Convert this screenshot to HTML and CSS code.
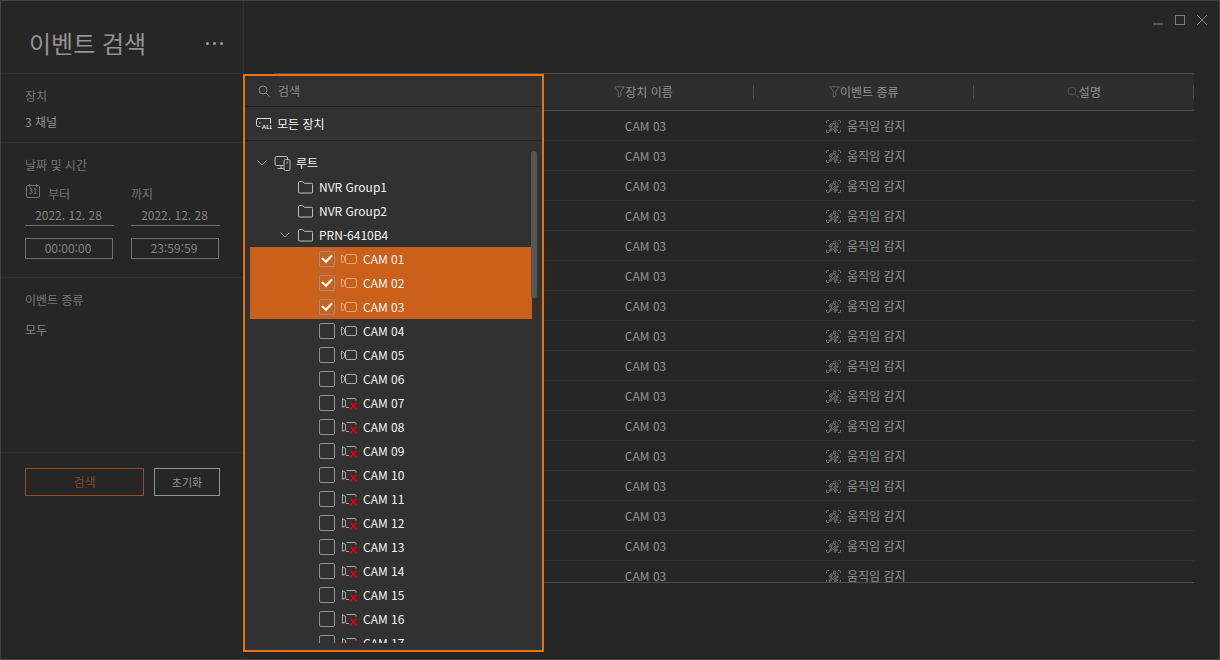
FILE: index.html
```
<!DOCTYPE html>
<html lang="ko">
<head>
<meta charset="utf-8">
<meta name="viewport" content="width=device-width, initial-scale=1">
<title>이벤트 검색</title>
<link rel="stylesheet" href="styles.css">
</head>
<body>
<svg class="sprite" aria-hidden="true">
  <symbol id="search" viewBox="0 0 12 12"><circle cx="5" cy="5" r="4"/><path d="M8 8l3.500 3.500"/></symbol>
  <symbol id="funnel" viewBox="0 0 11 12"><path d="M.7.8h9.600L6.800 5.500v4.200L4.300 11.300V5.500z"/></symbol>
  <symbol id="chevron" viewBox="0 0 10 6"><path d="M.5.5L5 5 9.500.5"/></symbol>
  <symbol id="folder" viewBox="0 0 15 13"><path d="M.5 11V1.500a1 1 0 0 1 1-1h3.200l1.500 1.800h7.300a1 1 0 0 1 1 1V11a1 1 0 0 1-1 1h-12a1 1 0 0 1-1-1z"/></symbol>
  <symbol id="root" viewBox="0 0 17 16"><path d="M9.500 10.500h-7a1.500 1.500 0 0 1-1.500-1.500V3a1.500 1.500 0 0 1 1.500-1.500h9.500A1.500 1.500 0 0 1 13.500 3v1.500M7 10.500v3M3.500 13.500h6"/><rect x="10" y="4.500" width="6" height="11" rx="1.500"/><path d="M13 6.500v2"/></symbol>
  <symbol id="camera" viewBox="0 0 16 10"><path d="M.5 1v8l3-2V3z"/><rect x="4.500" y=".5" width="11" height="9" rx="1.500"/></symbol>
  <symbol id="camera-off" viewBox="0 0 16 13"><path d="M1.500 1.500v9l3-2v-5zM15 3.500V2.500a1 1 0 0 0-1-1H5.500M4.500 3v6.500a1 1 0 0 0 1 1H8"/><path class="cross" d="M9 5.500l6.500 7M15.500 5.500l-6.500 7"/></symbol>
  <symbol id="motion" viewBox="0 0 15 13"><path d="M.5 3V1.500a1 1 0 0 1 1-1H3M12 .5h1.500a1 1 0 0 1 1 1V3M.5 10v1.500a1 1 0 0 0 1 1H3M12 12.500h1.500a1 1 0 0 0 1-1V10"/><circle cx="8.700" cy="2.300" r="1.300"/><path d="M3 6.500l2-2.700 3.500.2 1.800 2.200h1.700v1h-2.200L8.500 6.200 7.800 7.800l2.200 1.400v3H8.800V10L6.300 8.600l-1 2L3 11.500v-1.200l1.500-.8 1.800-4.200h-.8L4 7.200zM11.500 3.500l1 1.500M10.500 8.500l1 2.500"/></symbol>
</svg>

<div class="app">
  <aside class="sidebar">
    <header class="side-head">
      <h1>이벤트 검색</h1>
      <button class="more" type="button" aria-label="더 보기"><i></i><i></i><i></i></button>
    </header>
    <section class="block device">
      <h2>장치</h2>
      <p class="device-value">3 채널</p>
    </section>
    <section class="block period">
      <h2>날짜 및 시간</h2>
      <div class="range">
        <div class="stamp">
          <label for="from">
            <svg class="calendar" viewBox="0 0 14 14"><rect x=".5" y="1.500" width="13" height="12" rx="1.500"/><path d="M3.500 0v3M10.500 0v3"/><text x="7" y="10">31</text></svg>
            부터</label>
          <input class="date" id="from" value="2022. 12. 28">
          <input class="time" aria-label="시작 시간" value="00:00:00">
        </div>
        <div class="stamp">
          <label for="to">까지</label>
          <input class="date" id="to" value="2022. 12. 28">
          <input class="time" aria-label="종료 시간" value="23:59:59">
        </div>
      </div>
    </section>
    <section class="block kind">
      <h2>이벤트 종류</h2>
      <p>모두</p>
    </section>
    <div class="actions">
      <button class="btn primary" type="button">검색</button>
      <button class="btn" type="button">초기화</button>
    </div>
  </aside>

  <main class="results">
    <div class="window-buttons">
      <button type="button" aria-label="최소화"><svg viewBox="0 0 12 12"><path class="thick" d="M1 10h10"/></svg></button>
      <button type="button" aria-label="최대화"><svg viewBox="0 0 12 12"><rect x="1.500" y="1.500" width="9" height="9"/></svg></button>
      <button type="button" aria-label="닫기"><svg viewBox="0 0 12 12"><path d="M1 1l10 10M11 1L1 11"/></svg></button>
    </div>
    <div class="table-wrap">
      <table>
        <colgroup><col class="lead"><col><col><col></colgroup>
        <thead><tr>
          <th></th>
          <th><span class="cell"><svg class="ic-funnel"><use href="#funnel"/></svg>장치 이름</span></th>
          <th><span class="cell"><svg class="ic-funnel"><use href="#funnel"/></svg>이벤트 종류</span></th>
          <th><span class="cell"><svg class="ic-search dim"><use href="#search"/></svg>설명</span></th>
        </tr></thead>
        <tbody>
          <tr><td></td><td>CAM 03</td><td><span class="cell event"><svg class="ic-motion"><use href="#motion"/></svg>움직임 감지</span></td><td></td></tr>
          <tr><td></td><td>CAM 03</td><td><span class="cell event"><svg class="ic-motion"><use href="#motion"/></svg>움직임 감지</span></td><td></td></tr>
          <tr><td></td><td>CAM 03</td><td><span class="cell event"><svg class="ic-motion"><use href="#motion"/></svg>움직임 감지</span></td><td></td></tr>
          <tr><td></td><td>CAM 03</td><td><span class="cell event"><svg class="ic-motion"><use href="#motion"/></svg>움직임 감지</span></td><td></td></tr>
          <tr><td></td><td>CAM 03</td><td><span class="cell event"><svg class="ic-motion"><use href="#motion"/></svg>움직임 감지</span></td><td></td></tr>
          <tr><td></td><td>CAM 03</td><td><span class="cell event"><svg class="ic-motion"><use href="#motion"/></svg>움직임 감지</span></td><td></td></tr>
          <tr><td></td><td>CAM 03</td><td><span class="cell event"><svg class="ic-motion"><use href="#motion"/></svg>움직임 감지</span></td><td></td></tr>
          <tr><td></td><td>CAM 03</td><td><span class="cell event"><svg class="ic-motion"><use href="#motion"/></svg>움직임 감지</span></td><td></td></tr>
          <tr><td></td><td>CAM 03</td><td><span class="cell event"><svg class="ic-motion"><use href="#motion"/></svg>움직임 감지</span></td><td></td></tr>
          <tr><td></td><td>CAM 03</td><td><span class="cell event"><svg class="ic-motion"><use href="#motion"/></svg>움직임 감지</span></td><td></td></tr>
          <tr><td></td><td>CAM 03</td><td><span class="cell event"><svg class="ic-motion"><use href="#motion"/></svg>움직임 감지</span></td><td></td></tr>
          <tr><td></td><td>CAM 03</td><td><span class="cell event"><svg class="ic-motion"><use href="#motion"/></svg>움직임 감지</span></td><td></td></tr>
          <tr><td></td><td>CAM 03</td><td><span class="cell event"><svg class="ic-motion"><use href="#motion"/></svg>움직임 감지</span></td><td></td></tr>
          <tr><td></td><td>CAM 03</td><td><span class="cell event"><svg class="ic-motion"><use href="#motion"/></svg>움직임 감지</span></td><td></td></tr>
          <tr><td></td><td>CAM 03</td><td><span class="cell event"><svg class="ic-motion"><use href="#motion"/></svg>움직임 감지</span></td><td></td></tr>
          <tr><td></td><td>CAM 03</td><td><span class="cell event"><svg class="ic-motion"><use href="#motion"/></svg>움직임 감지</span></td><td></td></tr>
        </tbody>
      </table>
    </div>
  </main>

  <div class="picker">
    <label class="picker-search">
      <svg class="ic-search"><use href="#search"/></svg>
      <input type="search" placeholder="검색" aria-label="검색">
    </label>
    <button class="picker-all" type="button">
      <svg class="ic-all" viewBox="0 0 16 12"><path d="M4.500 8.500h-2a2 2 0 0 1-2-2v-4a2 2 0 0 1 2-2h12v5M1 .5h13.500M3 5h1.500"/><text x="6" y="11">ALL</text></svg>
      모든 장치
    </button>
    <div class="tree-area">
      <ul class="tree">
        <li class="node level0"><svg class="ic-chevron"><use href="#chevron"/></svg><svg class="ic-root"><use href="#root"/></svg>루트</li>
        <li class="node level1"><svg class="ic-folder"><use href="#folder"/></svg>NVR Group1</li>
        <li class="node level1"><svg class="ic-folder"><use href="#folder"/></svg>NVR Group2</li>
        <li class="node level1 open"><svg class="ic-chevron"><use href="#chevron"/></svg><svg class="ic-folder"><use href="#folder"/></svg>PRN-6410B4</li>
        <li><label class="node cam"><input type="checkbox" checked><svg class="ic-cam"><use href="#camera"/></svg>CAM 01</label></li>
        <li><label class="node cam"><input type="checkbox" checked><svg class="ic-cam"><use href="#camera"/></svg>CAM 02</label></li>
        <li><label class="node cam"><input type="checkbox" checked><svg class="ic-cam"><use href="#camera"/></svg>CAM 03</label></li>
        <li><label class="node cam"><input type="checkbox"><svg class="ic-cam"><use href="#camera"/></svg>CAM 04</label></li>
        <li><label class="node cam"><input type="checkbox"><svg class="ic-cam"><use href="#camera"/></svg>CAM 05</label></li>
        <li><label class="node cam"><input type="checkbox"><svg class="ic-cam"><use href="#camera"/></svg>CAM 06</label></li>
        <li><label class="node cam"><input type="checkbox"><svg class="ic-off"><use href="#camera-off"/></svg>CAM 07</label></li>
        <li><label class="node cam"><input type="checkbox"><svg class="ic-off"><use href="#camera-off"/></svg>CAM 08</label></li>
        <li><label class="node cam"><input type="checkbox"><svg class="ic-off"><use href="#camera-off"/></svg>CAM 09</label></li>
        <li><label class="node cam"><input type="checkbox"><svg class="ic-off"><use href="#camera-off"/></svg>CAM 10</label></li>
        <li><label class="node cam"><input type="checkbox"><svg class="ic-off"><use href="#camera-off"/></svg>CAM 11</label></li>
        <li><label class="node cam"><input type="checkbox"><svg class="ic-off"><use href="#camera-off"/></svg>CAM 12</label></li>
        <li><label class="node cam"><input type="checkbox"><svg class="ic-off"><use href="#camera-off"/></svg>CAM 13</label></li>
        <li><label class="node cam"><input type="checkbox"><svg class="ic-off"><use href="#camera-off"/></svg>CAM 14</label></li>
        <li><label class="node cam"><input type="checkbox"><svg class="ic-off"><use href="#camera-off"/></svg>CAM 15</label></li>
        <li><label class="node cam"><input type="checkbox"><svg class="ic-off"><use href="#camera-off"/></svg>CAM 16</label></li>
        <li><label class="node cam"><input type="checkbox"><svg class="ic-off"><use href="#camera-off"/></svg>CAM 17</label></li>
      </ul>
      <div class="scrollbar"></div>
    </div>
  </div>
</div>
</body>
</html>
```
FILE: styles.css
```
* { box-sizing: border-box; }

body {
  margin: 0;
  background: #262626;
  color: #929292;
  font: 12px/18px "Noto Sans CJK KR", "Noto Sans", sans-serif;
}

h1, h2, p, ul { margin: 0; padding: 0; font-weight: 400; }
ul { list-style: none; }

button, input {
  margin: 0;
  padding: 0;
  border: 0;
  border-radius: 0;
  background: none;
  color: inherit;
  font: inherit;
}

svg {
  flex: none;
  fill: none;
  stroke: currentColor;
  stroke-width: 1;
}

svg text { fill: currentColor; stroke: none; }

.sprite { position: absolute; width: 0; height: 0; }

.app {
  position: relative;
  display: flex;
  height: 100vh;
  min-height: 520px;
  border: 1px solid #434343;
}

/* Sidebar */
.sidebar {
  flex: none;
  width: 243px;
  border-right: 1px solid #303030;
}

.side-head {
  display: flex;
  align-items: center;
  justify-content: space-between;
  height: 73px;
  padding: 12px 20px 0 28px;
  border-bottom: 1px solid #303030;
}

.side-head h1 { font-size: 24px; line-height: 36px; }

.more { display: flex; gap: 4px; }
.more i { width: 3px; height: 3px; border-radius: 50%; background: #a0a0a0; }

.block { padding: 13px 24px; border-bottom: 1px solid #303030; }
.block h2 { color: #787878; font-size: 12px; }
.device { height: 69px; }
.device-value { margin-top: 8px; }
.period { height: 135px; }
.kind { height: 175px; }
.kind p { margin-top: 12px; color: #848484; }

.range { display: flex; gap: 17px; margin-top: 9px; }
.stamp { width: 89px; color: #848484; }
.stamp label { display: flex; align-items: center; gap: 8px; height: 22px; color: #747474; }
.stamp input { display: block; padding: 0 2px 2px 0; text-align: center; }
.calendar { width: 14px; height: 14px; margin: 0 0 6px 1px; }
.calendar text { font-size: 7px; font-weight: 700; text-anchor: middle; }
.date { width: 89px; height: 21px; border-bottom: 1px solid #707070; }
.time { width: 88px; height: 21px; border: 1px solid #707070; }
.stamp .time { margin-top: 12px; }

.actions { display: flex; gap: 10px; padding: 15px 23px 15px 24px; }
.btn { width: 66px; height: 28px; border: 1px solid #929292; font-size: 11px; }
.btn.primary { flex: 1; border-color: #964f24; color: #87471f; font-size: 12px; }

/* Results */
.results {
  flex: 1;
  display: flex;
  flex-direction: column;
  min-width: 0;
  padding: 0 25px 76px 30px;
}

.window-buttons {
  display: flex;
  justify-content: flex-end;
  gap: 10px;
  height: 72px;
  margin-right: -14px;
  padding-top: 13px;
  color: #7c7c7c;
}
.window-buttons button { width: 12px; height: 12px; }
.window-buttons svg { display: block; width: 12px; height: 12px; }
.thick { stroke-width: 2; stroke: #555; }

.table-wrap { flex: 1; min-height: 0; overflow: hidden; border-bottom: 1px solid #4a4a4a; }
table { width: 100%; border-spacing: 0; table-layout: fixed; }
.lead { width: 28.2%; }
th, td { padding: 0; text-align: center; font-weight: 400; }
th {
  height: 38px;
  padding-bottom: 2px;
  border-top: 1px solid #4a4a4a;
  border-bottom: 1px solid #4a4a4a;
  background: linear-gradient(#4a4a4a, #4a4a4a) right center / 1px 14px no-repeat #2e2e2e;
}
th:first-child { background: #2e2e2e; }
td { height: 30px; padding-left: 4px; border-bottom: 1px solid #303030; }

.cell { display: inline-flex; align-items: center; vertical-align: middle; }
.event { gap: 6px; }
.ic-funnel { width: 11px; height: 12px; color: #666; }
.ic-motion { width: 15px; height: 13px; color: #777; }
.ic-search { width: 12px; height: 12px; }
.dim { color: #505050; }

/* Device picker, floating over the results */
.picker {
  position: absolute;
  top: 73px;
  bottom: 7px;
  left: 242px;
  display: flex;
  flex-direction: column;
  width: 301px;
  border: 2px solid #e27412;
  background: #313131;
  color: #f4f4f4;
}

.picker-search {
  display: flex;
  align-items: center;
  gap: 8px;
  height: 31px;
  padding: 0 13px;
  border-bottom: 1px solid #232323;
  color: #888;
}
.picker-search input { flex: 1; min-width: 0; outline: 0; appearance: none; }
.picker-search input::placeholder { color: #8c8c8c; opacity: 1; }

.picker-all {
  display: flex;
  align-items: center;
  gap: 5px;
  height: 34px;
  padding: 0 11px;
  border-bottom: 1px solid #232323;
}
.ic-all { width: 16px; height: 12px; color: #ddd; }
.ic-all text { font: 700 6px "Noto Sans", sans-serif; }

.tree-area {
  flex: 1;
  display: flex;
  min-height: 0;
  margin: 10px 5px 7px;
  overflow: hidden;
}
.tree { flex: 1; }
.node { display: flex; align-items: center; height: 24px; }
.level0 { gap: 5px; padding-left: 7px; }
.level1 { gap: 6px; padding-left: 48px; }
.open { padding-left: 30px; }
.cam { gap: 6px; padding-left: 69px; }
.cam:has(:checked) { background: #cb601b; }
.cam svg { color: #aaa; }
.cam:has(:checked) svg { color: #e3a580; }

.ic-chevron { width: 10px; height: 6px; margin-right: 2px; color: #999; }
.ic-root { width: 17px; height: 16px; color: #bbb; }
.ic-folder { width: 15px; height: 13px; color: #bbb; }
.ic-cam { width: 16px; height: 10px; }
.ic-off { width: 16px; height: 13px; }
.cross { stroke: #e80000; stroke-width: 1.3; }

input[type="checkbox"] {
  appearance: none;
  display: grid;
  place-items: center;
  width: 16px;
  height: 16px;
  border: 1px solid #929292;
  border-radius: 2px;
}
input[type="checkbox"]:checked::before {
  content: "";
  width: 12px;
  height: 10px;
  background: #f4f4f4;
  clip-path: polygon(0 48%, 15% 32%, 40% 62%, 85% 4%, 100% 18%, 42% 94%);
}

.scrollbar { width: 6px; height: 147px; margin-left: -1px; border-radius: 3px; background: #565656; }
```
